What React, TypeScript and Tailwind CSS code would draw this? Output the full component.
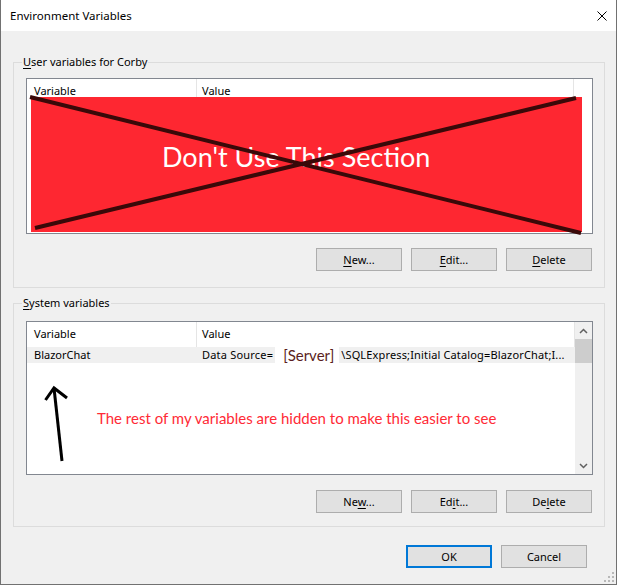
import React from 'react'

function Btn({ pre, u, post, primary }: { pre?: string; u?: string; post?: string; primary?: boolean }) {
  return (
    <button
      className={`h-[23px] w-[86px] bg-[#e1e1e1] text-[11px] text-black leading-none ${
        primary ? 'border-2 border-[#0078d7]' : 'border border-[#adadad]'
      }`}
    >
      {pre}
      {u && <span className="underline underline-offset-[2px]">{u}</span>}
      {post}
    </button>
  )
}

function ListHeader({ scroll }: { scroll?: boolean }) {
  return (
    <div className="flex h-[25px] items-center bg-white">
      <div className="flex h-full w-[170px] shrink-0 items-center border-r border-[#e5e5e5] pl-[7px]">Variable</div>
      <div className={`flex h-full items-center border-r border-[#e5e5e5] pl-[5px] ${scroll ? 'flex-1' : 'w-[377px]'}`}>
        Value
      </div>
    </div>
  )
}

export default function App() {
  return (
    <div className="h-[585px] w-[618px] overflow-hidden bg-white font-['Noto_Sans','Liberation_Sans',sans-serif] text-[11px] text-black">
      <div className="relative flex h-[585px] w-[617px] flex-col border-x border-b border-[#717171] bg-[#f0f0f0]">
        {/* Title bar */}
        <div className="flex h-[31px] items-center justify-between bg-white pl-[9px] pr-[9px]">
          <span className="text-[11.5px]">Environment Variables</span>
          <svg width="10" height="10" viewBox="0 0 10 10" className="mt-[1px]">
            <path d="M0.5 0.5 L9.5 9.5 M9.5 0.5 L0.5 9.5" stroke="#000" strokeWidth="1" />
          </svg>
        </div>

        {/* User variables */}
        <fieldset className="ml-[12px] mt-[23px] w-[592px] min-w-0 border border-[#dcdcdc] pb-[16px] pl-[12px] pr-[11px]">
          <legend className="-ml-[4px] h-[16px] px-[1px] leading-[16px]">
            <span className="underline underline-offset-[2px]">U</span>ser variables for Corby
          </legend>
          <div className="relative mt-[8px] h-[156px] border border-[#828790] bg-white">
            <ListHeader />
            <div className="absolute left-[4px] top-[18px] h-[135px] w-[551px] bg-[#fe2731]">
              <div className="pl-[131px] pt-[45px] font-['Lato','Open_Sans',sans-serif] text-[27px] leading-[30px] text-white">
                Don't Use This Section
              </div>
              <svg className="absolute left-0 top-0 overflow-visible" width="551" height="135" viewBox="0 0 551 135">
                <path d="M-1 0 L550 136" stroke="#3a0909" strokeWidth="4" />
                <path d="M4 131 L545 1" stroke="#3a0909" strokeWidth="4" />
              </svg>
            </div>
          </div>
          <div className="mt-[14px] flex justify-end gap-[9px] pr-[1px]">
            <Btn u="N" post="ew..." />
            <Btn u="E" post="dit..." />
            <Btn u="D" post="elete" />
          </div>
        </fieldset>

        {/* System variables */}
        <fieldset className="ml-[12px] mt-[7px] w-[592px] min-w-0 border border-[#dcdcdc] pb-[13px] pl-[12px] pr-[11px]">
          <legend className="-ml-[4px] h-[16px] px-[1px] leading-[16px]">
            <span className="underline underline-offset-[2px]">S</span>ystem variables
          </legend>
          <div className="relative mt-[10px] flex h-[154px] border border-[#828790] bg-white">
            <div className="min-w-0 flex-1 overflow-hidden">
              <ListHeader scroll />
              <div className="flex h-[16px] items-center bg-[#f0f0f0]">
                <div className="w-[170px] shrink-0 pl-[7px]">BlazorChat</div>
                <div className="flex items-center whitespace-nowrap pl-[5px]">
                  <span className="tracking-[0.2px]">Data Source=</span>
                  <span className="ml-[2px] flex h-[16px] w-[64px] items-center bg-white pl-[8px] font-['Lato','Open_Sans',sans-serif] text-[15px] leading-none text-[#5a1e20]">
                    [Server]
                  </span>
                  <span className="ml-[2px] tracking-[0.15px]">\SQLExpress;Initial Catalog=BlazorChat;I...</span>
                </div>
              </div>
            </div>
            {/* Scrollbar */}
            <div className="flex w-[17px] shrink-0 flex-col bg-[#f0f0f0]">
              <div className="flex h-[17px] items-center justify-center">
                <svg width="9" height="6" viewBox="0 0 9 6">
                  <path d="M1 5 L4.5 1.5 L8 5" fill="none" stroke="#606060" strokeWidth="1.5" />
                </svg>
              </div>
              <div className="h-[24px] bg-[#cdcdcd]" />
              <div className="flex-1" />
              <div className="flex h-[17px] items-center justify-center">
                <svg width="9" height="6" viewBox="0 0 9 6">
                  <path d="M1 1 L4.5 4.5 L8 1" fill="none" stroke="#606060" strokeWidth="1.5" />
                </svg>
              </div>
            </div>
            {/* Annotation */}
            <svg className="absolute left-[16px] top-[63px]" width="26" height="78" viewBox="0 0 26 78">
              <path d="M19 76 L11 3" stroke="#000" strokeWidth="3" fill="none" />
              <path d="M2.5 15 L11 3 L24 13" stroke="#000" strokeWidth="3" fill="none" />
            </svg>
            <div className="absolute left-[70px] top-[86px] whitespace-nowrap font-['Lato','Open_Sans',sans-serif] text-[15px] leading-[20px] text-[#ff2a36]">
              The rest of my variables are hidden to make this easier to see
            </div>
          </div>
          <div className="mt-[15px] flex justify-end gap-[9px] pr-[1px]">
            <Btn pre="Ne" u="w" post="..." />
            <Btn pre="Ed" u="i" post="t..." />
            <Btn pre="De" u="l" post="ete" />
          </div>
        </fieldset>

        <div className="mt-[18px] flex justify-end gap-[9px] pr-[29px]">
          <Btn pre="OK" primary />
          <Btn pre="Cancel" />
        </div>

        {/* Resize grip */}
        <svg className="absolute bottom-[2px] right-[2px]" width="10" height="10" viewBox="0 0 10 10">
          <rect x="8" y="0" width="2" height="2" fill="#b8b8b8" />
          <rect x="4" y="4" width="2" height="2" fill="#b8b8b8" />
          <rect x="8" y="4" width="2" height="2" fill="#b8b8b8" />
          <rect x="0" y="8" width="2" height="2" fill="#b8b8b8" />
          <rect x="4" y="8" width="2" height="2" fill="#b8b8b8" />
          <rect x="8" y="8" width="2" height="2" fill="#b8b8b8" />
        </svg>
      </div>
    </div>
  )
}
